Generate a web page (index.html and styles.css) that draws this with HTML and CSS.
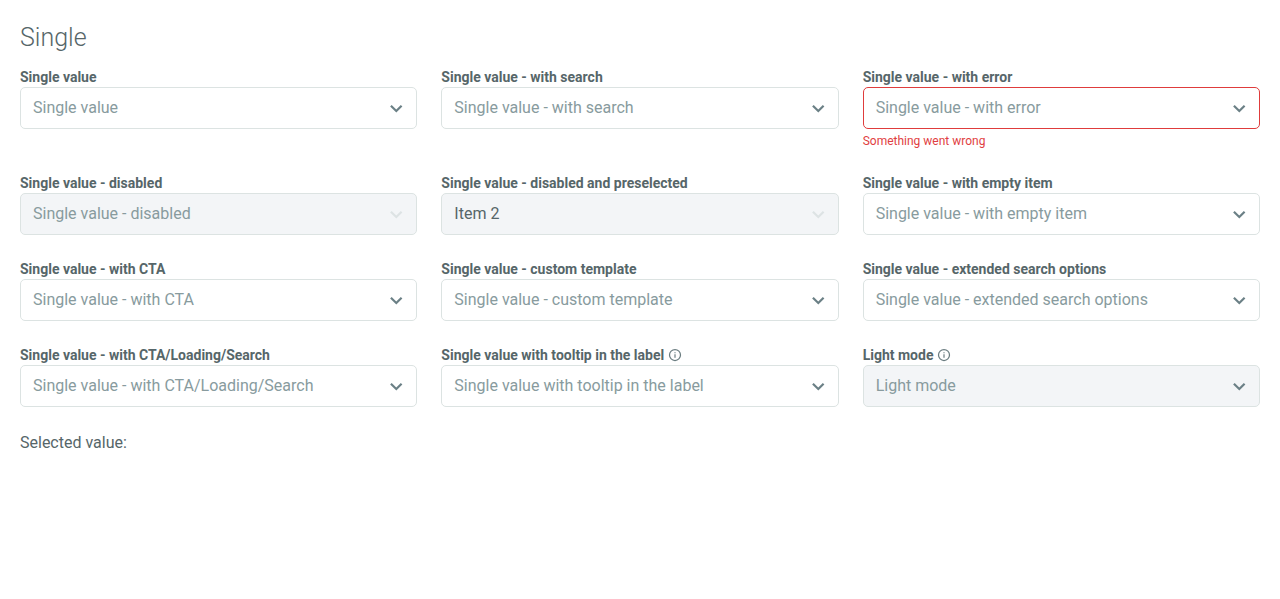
FILE: index.html
```html
<!DOCTYPE html>
<html lang="en">
<head>
<meta charset="utf-8">
<title>Single select</title>
<link rel="stylesheet" href="styles.css">
</head>
<body>
<svg width="0" height="0" class="sprite">
  <symbol id="chevron" viewBox="0 0 24 24"><path d="M6.9 9.7 12.3 15l5.3-5.3" fill="none" stroke="currentColor" stroke-width="2.2"/></symbol>
  <symbol id="info" viewBox="0 0 16 16"><circle cx="8" cy="8" r="5.5" fill="none" stroke="currentColor" stroke-width="1.25"/><path d="M8 7.3v3.4M8 5.2v1.1" stroke="currentColor" stroke-width="1.2"/></symbol>
</svg>
<main class="page">
  <h1 class="title">Single</h1>
  <div class="grid">
    <div class="field"><div class="label">Single value</div><div class="select"><span>Single value</span><svg class="arrow"><use href="#chevron"/></svg></div></div>
    <div class="field"><div class="label">Single value - with search</div><div class="select"><span>Single value - with search</span><svg class="arrow"><use href="#chevron"/></svg></div></div>
    <div class="field"><div class="label">Single value - with error</div><div class="select error"><span>Single value - with error</span><svg class="arrow"><use href="#chevron"/></svg></div><div class="message">Something went wrong</div></div>
    <div class="field"><div class="label">Single value - disabled</div><div class="select muted disabled"><span>Single value - disabled</span><svg class="arrow"><use href="#chevron"/></svg></div></div>
    <div class="field"><div class="label">Single value - disabled and preselected</div><div class="select muted disabled"><span class="value">Item 2</span><svg class="arrow"><use href="#chevron"/></svg></div></div>
    <div class="field"><div class="label">Single value - with empty item</div><div class="select"><span>Single value - with empty item</span><svg class="arrow"><use href="#chevron"/></svg></div></div>
    <div class="field"><div class="label">Single value - with CTA</div><div class="select"><span>Single value - with CTA</span><svg class="arrow"><use href="#chevron"/></svg></div></div>
    <div class="field"><div class="label">Single value - custom template</div><div class="select"><span>Single value - custom template</span><svg class="arrow"><use href="#chevron"/></svg></div></div>
    <div class="field"><div class="label">Single value - extended search options</div><div class="select"><span>Single value - extended search options</span><svg class="arrow"><use href="#chevron"/></svg></div></div>
    <div class="field"><div class="label">Single value - with CTA/Loading/Search</div><div class="select"><span>Single value - with CTA/Loading/Search</span><svg class="arrow"><use href="#chevron"/></svg></div></div>
    <div class="field"><div class="label">Single value with tooltip in the label<svg class="info"><use href="#info"/></svg></div><div class="select"><span>Single value with tooltip in the label</span><svg class="arrow"><use href="#chevron"/></svg></div></div>
    <div class="field"><div class="label">Light mode<svg class="info"><use href="#info"/></svg></div><div class="select muted"><span>Light mode</span><svg class="arrow"><use href="#chevron"/></svg></div></div>
  </div>
  <p class="selected">Selected value:</p>
</main>
</body>
</html>
```

FILE: styles.css
```css
* { box-sizing: border-box; }
body { margin: 0; background: #fff; color: #566669; font-family: Roboto, sans-serif; font-size: 16px; line-height: 24px; }
.sprite { position: absolute; }
.page { padding: 20px; }
.title { margin: 0 0 11px; font-size: 25px; line-height: 36px; font-weight: 300; }
.grid { display: grid; grid-template-columns: repeat(3, minmax(0, 1fr)); column-gap: 24px; row-gap: 24px; }
.label { display: flex; align-items: center; gap: 3px; height: 20px; font-size: 14px; line-height: 20px; font-weight: 700; }
.select { display: flex; align-items: center; justify-content: space-between; height: 42px; padding: 0 8px 0 12px; border: 1px solid #dce3e2; border-radius: 5px; color: #889b9e; }
.arrow { width: 24px; height: 24px; color: #6b8086; }
.error { border-color: #df3c3c; }
.muted { background: #f3f5f7; }
.disabled .arrow { color: #dde3e4; }
.value { color: #566669; }
.message { margin-top: 4px; font-size: 12px; line-height: 16px; color: #e13e42; }
.info { width: 16px; height: 16px; color: #6b7d81; }
.selected { margin: 24px 0 0; }
```
